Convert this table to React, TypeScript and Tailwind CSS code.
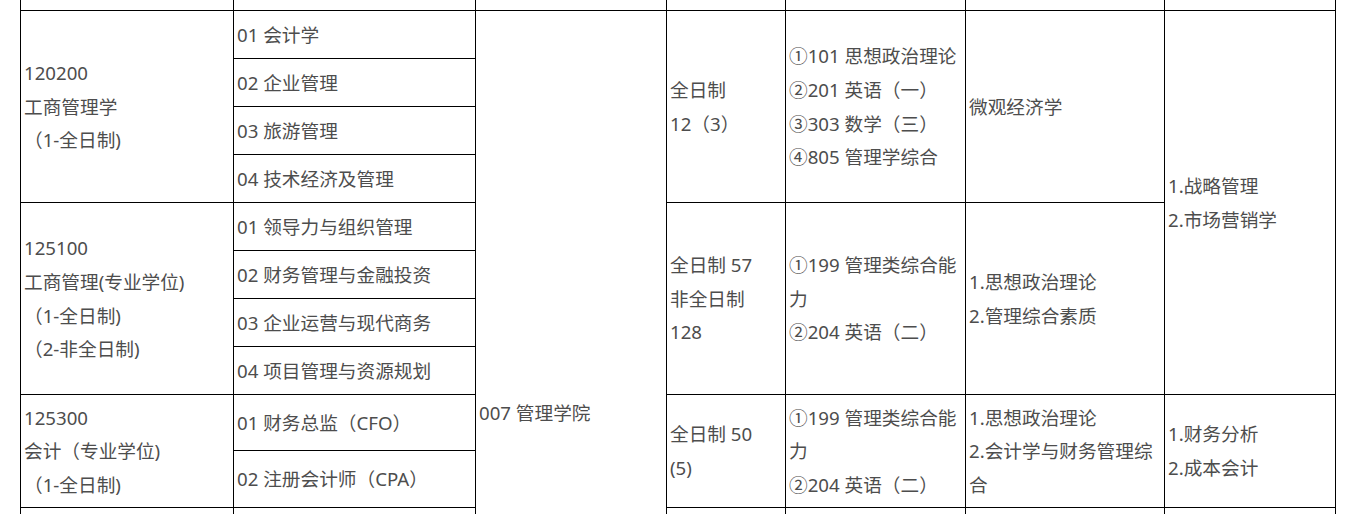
const Cell = ({
  pos,
  lines,
  className = "",
}: {
  pos: string;
  lines?: string[];
  className?: string;
}) => (
  <div className={`bg-white flex flex-col justify-center pl-[3px] overflow-hidden ${pos} ${className}`}>
    {lines?.map((l, i) => (
      <div key={i} className="whitespace-nowrap">
        {l}
      </div>
    ))}
  </div>
);

export default function App() {
  return (
    <div
      className="h-[514px] w-[1345px] overflow-hidden bg-white text-[#4d4d4d] text-[18.67px] leading-[33.6px]"
      style={{ fontFamily: '"Noto Sans", "Noto Sans CJK SC", sans-serif' }}
    >
      <div className="ml-[20px] w-[1316px] grid gap-px bg-black border-x border-black grid-cols-[212px_241px_190px_118px_179px_198px_170px] grid-rows-[10px_47px_47px_47px_47px_47px_47px_47px_47px_55px_56px_307px]">
        {/* top row, cut off */}
        <Cell pos="col-start-1 row-[1/span_1]" />
        <Cell pos="col-start-2 row-[1/span_1]" />
        <Cell pos="col-start-3 row-[1/span_1]" />
        <Cell pos="col-start-4 row-[1/span_1]" />
        <Cell pos="col-start-5 row-[1/span_1]" />
        <Cell pos="col-start-6 row-[1/span_1]" />
        <Cell pos="col-start-7 row-[1/span_1]" />

        {/* major */}
        <Cell pos="col-start-1 row-[2/span_4]" lines={["120200", "工商管理学", "（1-全日制)"]} />
        <Cell
          pos="col-start-1 row-[6/span_4]"
          lines={["125100", "工商管理(专业学位)", "（1-全日制)", "（2-非全日制)"]}
        />
        <Cell pos="col-start-1 row-[10/span_2]" lines={["125300", "会计（专业学位)", "（1-全日制)"]} />
        <Cell pos="col-start-1 row-[12/span_1]" />

        {/* direction */}
        <Cell pos="col-start-2 row-[2/span_1]" lines={["01 会计学"]} />
        <Cell pos="col-start-2 row-[3/span_1]" lines={["02 企业管理"]} />
        <Cell pos="col-start-2 row-[4/span_1]" lines={["03 旅游管理"]} />
        <Cell pos="col-start-2 row-[5/span_1]" lines={["04 技术经济及管理"]} />
        <Cell pos="col-start-2 row-[6/span_1]" lines={["01 领导力与组织管理"]} />
        <Cell pos="col-start-2 row-[7/span_1]" lines={["02 财务管理与金融投资"]} />
        <Cell pos="col-start-2 row-[8/span_1]" lines={["03 企业运营与现代商务"]} />
        <Cell pos="col-start-2 row-[9/span_1]" lines={["04 项目管理与资源规划"]} />
        <Cell pos="col-start-2 row-[10/span_1]" lines={["01 财务总监（CFO）"]} />
        <Cell pos="col-start-2 row-[11/span_1]" lines={["02 注册会计师（CPA）"]} />
        <Cell pos="col-start-2 row-[12/span_1]" />

        {/* school */}
        <Cell pos="col-start-3 row-[2/span_11]" lines={["007 管理学院"]} />

        {/* quota */}
        <Cell pos="col-start-4 row-[2/span_4]" lines={["全日制", "12（3）"]} />
        <Cell pos="col-start-4 row-[6/span_4]" lines={["全日制 57", "非全日制", "128"]} />
        <Cell pos="col-start-4 row-[10/span_2]" lines={["全日制 50", "(5)"]} />
        <Cell pos="col-start-4 row-[12/span_1]" />

        {/* exam subjects */}
        <Cell
          pos="col-start-5 row-[2/span_4]"
          lines={["①101 思想政治理论", "②201 英语（一）", "③303 数学（三）", "④805 管理学综合"]}
        />
        <Cell pos="col-start-5 row-[6/span_4]" lines={["①199 管理类综合能", "力", "②204 英语（二）"]} />
        <Cell pos="col-start-5 row-[10/span_2]" lines={["①199 管理类综合能", "力", "②204 英语（二）"]} />
        <Cell pos="col-start-5 row-[12/span_1]" />

        {/* retest */}
        <Cell pos="col-start-6 row-[2/span_4]" lines={["微观经济学"]} />
        <Cell pos="col-start-6 row-[6/span_4]" lines={["1.思想政治理论", "2.管理综合素质"]} />
        <Cell pos="col-start-6 row-[10/span_2]" lines={["1.思想政治理论", "2.会计学与财务管理综", "合"]} />
        <Cell pos="col-start-6 row-[12/span_1]" />

        {/* equivalent */}
        <Cell pos="col-start-7 row-[2/span_8]" lines={["1.战略管理", "2.市场营销学"]} />
        <Cell pos="col-start-7 row-[10/span_2]" lines={["1.财务分析", "2.成本会计"]} />
        <Cell pos="col-start-7 row-[12/span_1]" />
      </div>
    </div>
  );
}
